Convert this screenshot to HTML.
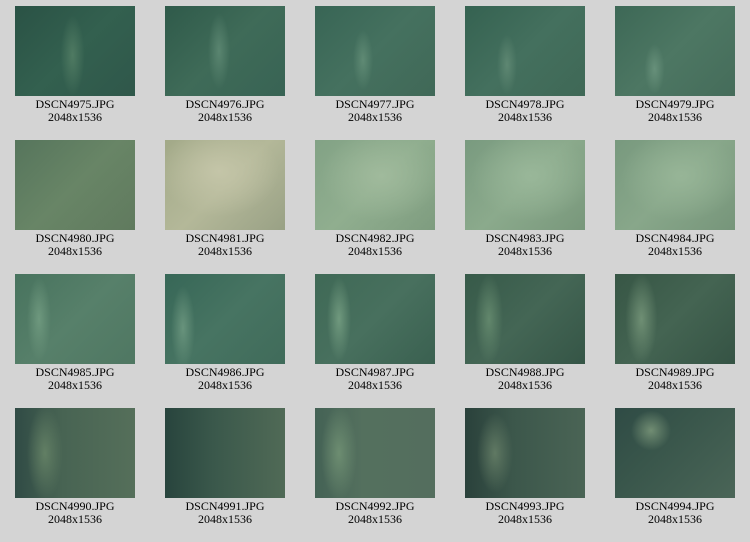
<!DOCTYPE html>
<html><head><style>
html,body{margin:0;padding:0;}
body{width:750px;height:542px;background:#d4d4d4;position:relative;overflow:hidden;font-family:"Liberation Serif",serif;}
.c{position:absolute;width:150px;text-align:center;font-size:12px;line-height:13px;color:#000;}
.i{width:120px;height:90px;margin:0 auto 2px auto;}
</style></head><body>
<div class="c" style="left:0;top:6px"><div class="i" style="background:radial-gradient(ellipse 12px 40px at 48% 55%,#4f7a62,transparent),linear-gradient(135deg,#2a5245,#33604f 50%,#2f574a)"></div>DSCN4975.JPG<br>2048x1536</div>
<div class="c" style="left:150px;top:6px"><div class="i" style="background:radial-gradient(ellipse 11px 38px at 45% 50%,#5a8570,transparent),linear-gradient(135deg,#2f5a4a,#3f6b58 50%,#386354)"></div>DSCN4976.JPG<br>2048x1536</div>
<div class="c" style="left:300px;top:6px"><div class="i" style="background:radial-gradient(ellipse 10px 30px at 40% 60%,#5f8a74,transparent),linear-gradient(135deg,#386555,#45715f 50%,#406857)"></div>DSCN4977.JPG<br>2048x1536</div>
<div class="c" style="left:450px;top:6px"><div class="i" style="background:radial-gradient(ellipse 10px 30px at 35% 65%,#5e8772,transparent),linear-gradient(135deg,#356251,#44705e 50%,#3f6856)"></div>DSCN4978.JPG<br>2048x1536</div>
<div class="c" style="left:600px;top:6px"><div class="i" style="background:radial-gradient(ellipse 10px 25px at 33% 70%,#67907a,transparent),linear-gradient(135deg,#3d6856,#4d7763 50%,#456c5a)"></div>DSCN4979.JPG<br>2048x1536</div>

<div class="c" style="left:0;top:140px"><div class="i" style="background:linear-gradient(135deg,#56755c,#688566 50%,#607a5e)"></div>DSCN4980.JPG<br>2048x1536</div>
<div class="c" style="left:150px;top:140px"><div class="i" style="background:radial-gradient(ellipse 60px 45px at 45% 35%,#c4c5a8,transparent),linear-gradient(135deg,#a2a988,#b4b899 50%,#99a185)"></div>DSCN4981.JPG<br>2048x1536</div>
<div class="c" style="left:300px;top:140px"><div class="i" style="background:radial-gradient(ellipse 60px 45px at 55% 40%,#a0ba9c,transparent),linear-gradient(135deg,#82a285,#90ae8f 50%,#7e9c7f)"></div>DSCN4982.JPG<br>2048x1536</div>
<div class="c" style="left:450px;top:140px"><div class="i" style="background:radial-gradient(ellipse 60px 45px at 55% 40%,#99b799,transparent),linear-gradient(135deg,#799a7f,#8baa8c 50%,#78977b)"></div>DSCN4983.JPG<br>2048x1536</div>
<div class="c" style="left:600px;top:140px"><div class="i" style="background:radial-gradient(ellipse 60px 45px at 55% 40%,#97b597,transparent),linear-gradient(135deg,#78997e,#88a78a 50%,#76957a)"></div>DSCN4984.JPG<br>2048x1536</div>

<div class="c" style="left:0;top:274px"><div class="i" style="background:radial-gradient(ellipse 12px 42px at 20% 50%,#6e987e,transparent),linear-gradient(135deg,#48735e,#57806a 50%,#4f7762)"></div>DSCN4985.JPG<br>2048x1536</div>
<div class="c" style="left:150px;top:274px"><div class="i" style="background:radial-gradient(ellipse 12px 42px at 15% 60%,#68937c,transparent),linear-gradient(135deg,#376757,#477462 50%,#406b5a)"></div>DSCN4986.JPG<br>2048x1536</div>
<div class="c" style="left:300px;top:274px"><div class="i" style="background:radial-gradient(ellipse 12px 42px at 20% 50%,#70997e,transparent),linear-gradient(135deg,#3f6956,#48705e 50%,#3a6050)"></div>DSCN4987.JPG<br>2048x1536</div>
<div class="c" style="left:450px;top:274px"><div class="i" style="background:radial-gradient(ellipse 14px 45px at 20% 50%,#62876c,transparent),linear-gradient(135deg,#375a49,#446655 50%,#355546)"></div>DSCN4988.JPG<br>2048x1536</div>
<div class="c" style="left:600px;top:274px"><div class="i" style="background:radial-gradient(ellipse 16px 45px at 22% 50%,#6f8f74,transparent),linear-gradient(135deg,#375645,#446452 50%,#355344)"></div>DSCN4989.JPG<br>2048x1536</div>

<div class="c" style="left:0;top:408px"><div class="i" style="background:radial-gradient(ellipse 18px 48px at 25% 50%,#627f64,transparent),linear-gradient(90deg,#304b45,#486453 40%,#556f5a)"></div>DSCN4990.JPG<br>2048x1536</div>
<div class="c" style="left:150px;top:408px"><div class="i" style="background:linear-gradient(90deg,#28443d,#3a584b 40%,#506a56)"></div>DSCN4991.JPG<br>2048x1536</div>
<div class="c" style="left:300px;top:408px"><div class="i" style="background:radial-gradient(ellipse 18px 48px at 20% 50%,#6d8d71,transparent),linear-gradient(90deg,#446255,#54705e 40%,#546e5e)"></div>DSCN4992.JPG<br>2048x1536</div>
<div class="c" style="left:450px;top:408px"><div class="i" style="background:radial-gradient(ellipse 18px 40px at 25% 50%,#607963,transparent),linear-gradient(90deg,#2a413b,#3c574b 40%,#4a6455)"></div>DSCN4993.JPG<br>2048x1536</div>
<div class="c" style="left:600px;top:408px"><div class="i" style="background:radial-gradient(ellipse 20px 20px at 30% 25%,#718d73,transparent),linear-gradient(135deg,#2f4b45,#39564b 40%,#4a6557)"></div>DSCN4994.JPG<br>2048x1536</div>
</body></html>
